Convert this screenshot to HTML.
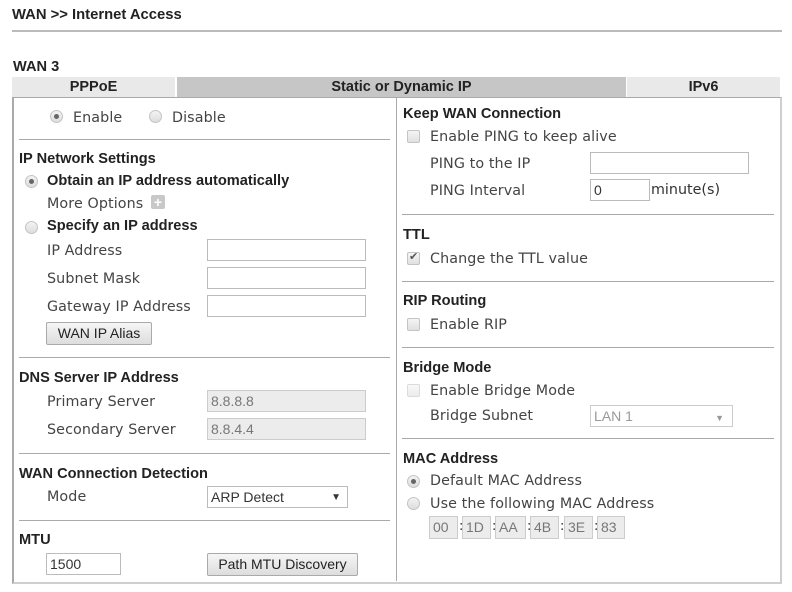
<!DOCTYPE html>
<html><head><meta charset="utf-8"><style>
*{box-sizing:border-box;margin:0;padding:0}
body{width:792px;height:592px;background:#fff;position:relative;overflow:hidden;font-family:"DejaVu Sans","Liberation Sans",sans-serif;color:#333}
.a{position:absolute;white-space:nowrap}
.h{font-family:"Liberation Sans",sans-serif;font-weight:bold;font-size:14.6px;color:#222;transform:translateY(1px)}
.l{font-size:14.3px;color:#444;letter-spacing:0.1px}
.in{position:absolute;height:22px;border:1px solid #bbb;background:#fff;font-family:"Liberation Sans",sans-serif;font-size:14px;color:#333;padding:2px 3px;line-height:16px}
.dis{background:#ececec;color:#777;border-color:#ccc}
.hr{position:absolute;height:1px;background:#aaa}
.rad{position:absolute;width:13px;height:13px;border-radius:50%;border:1px solid #c4c4c4;background:linear-gradient(#f3f3f3,#ddd)}
.rad.on::after{content:"";position:absolute;left:3px;top:3px;width:5px;height:5px;border-radius:50%;background:#666}
.cb{position:absolute;width:13px;height:13px;border:1px solid #c4c4c4;border-radius:2px;background:linear-gradient(#f5f5f5,#e0e0e0)}
.btn{position:absolute;height:23px;border:1px solid #aaa;border-radius:2px;background:linear-gradient(#f6f6f6,#ddd);font-family:"Liberation Sans",sans-serif;font-size:14px;color:#222;text-align:center;line-height:21px}
.tab{position:absolute;top:77px;height:20px;font-family:"Liberation Sans",sans-serif;font-weight:bold;font-size:14.5px;color:#222;text-align:center;line-height:20px}
</style></head><body>
<div class="a h" style="left:12px;top:6px;font-size:14.8px">WAN &gt;&gt; Internet Access</div>
<div class="hr" style="left:12px;top:30px;width:770px;background:#bbb;height:2px"></div>
<div class="a h" style="left:13px;top:58px">WAN 3</div>
<div class="tab" style="left:12px;width:163px;background:#e9e9e9">PPPoE</div>
<div class="tab" style="left:177px;width:449px;background:#c6c6c6">Static or Dynamic IP</div>
<div class="tab" style="left:627px;width:153px;background:#e9e9e9">IPv6</div>
<div class="a" style="left:12px;top:97px;width:770px;height:487px;border:2px solid #cfcfcf;border-top:1px solid #aaa;border-left:2px solid #aaa"></div>
<div class="a" style="left:396px;top:97px;width:1px;height:484px;background:#aaa"></div>

<!-- left -->
<div class="rad on" style="left:50px;top:110px"></div><div class="a l" style="left:73px;top:110px">Enable</div>
<div class="rad" style="left:149px;top:110px"></div><div class="a l" style="left:172px;top:110px">Disable</div>
<div class="hr" style="left:19px;top:139px;width:371px"></div>
<div class="a h" style="left:19px;top:150px">IP Network Settings</div>
<div class="rad on" style="left:25px;top:175px"></div><div class="a h" style="left:47px;top:172px">Obtain an IP address automatically</div>
<div class="a l" style="left:47px;top:196px">More Options</div>
<div class="a" style="left:151px;top:195px;width:14px;height:14px;background:#c8c8c8;border-radius:2px;color:#fff;font:bold 14px/14px 'Liberation Sans';text-align:center">+</div>
<div class="rad" style="left:25px;top:221px"></div><div class="a h" style="left:47px;top:217px">Specify an IP address</div>
<div class="a l" style="left:47px;top:243px">IP Address</div><div class="in" style="left:207px;top:239px;width:159px"></div>
<div class="a l" style="left:47px;top:271px">Subnet Mask</div><div class="in" style="left:207px;top:267px;width:159px"></div>
<div class="a l" style="left:47px;top:299px">Gateway IP Address</div><div class="in" style="left:207px;top:295px;width:159px"></div>
<div class="btn" style="left:46px;top:322px;width:106px">WAN IP Alias</div>
<div class="hr" style="left:19px;top:357px;width:371px"></div>
<div class="a h" style="left:19px;top:369px">DNS Server IP Address</div>
<div class="a l" style="left:47px;top:394px">Primary Server</div><div class="in dis" style="left:207px;top:390px;width:159px">8.8.8.8</div>
<div class="a l" style="left:47px;top:422px">Secondary Server</div><div class="in dis" style="left:207px;top:418px;width:159px">8.8.4.4</div>
<div class="hr" style="left:19px;top:453px;width:371px"></div>
<div class="a h" style="left:19px;top:465px">WAN Connection Detection</div>
<div class="a l" style="left:47px;top:489px">Mode</div>
<div class="in" style="left:207px;top:486px;width:141px">ARP Detect<span style="position:absolute;right:6px;font-size:10px;top:3px">▼</span></div>
<div class="hr" style="left:19px;top:520px;width:371px"></div>
<div class="a h" style="left:19px;top:531px">MTU</div>
<div class="in" style="left:46px;top:553px;width:75px">1500</div>
<div class="btn" style="left:207px;top:553px;width:151px">Path MTU Discovery</div>

<!-- right -->
<div class="a h" style="left:403px;top:105px">Keep WAN Connection</div>
<div class="cb" style="left:407px;top:130px"></div><div class="a l" style="left:430px;top:129px">Enable PING to keep alive</div>
<div class="a l" style="left:430px;top:156px">PING to the IP</div><div class="in" style="left:590px;top:152px;width:159px"></div>
<div class="a l" style="left:430px;top:183px">PING Interval</div><div class="in" style="left:590px;top:179px;width:60px">0</div>
<div class="a" style="left:651px;top:182px;font-size:14.3px;color:#333">minute(s)</div>
<div class="hr" style="left:402px;top:214px;width:372px"></div>
<div class="a h" style="left:403px;top:226px">TTL</div>
<div class="cb" style="left:407px;top:252px"></div><div class="a" style="left:409px;top:250px;font-size:11px;color:#555">✔</div><div class="a l" style="left:430px;top:251px">Change the TTL value</div>
<div class="hr" style="left:402px;top:281px;width:372px"></div>
<div class="a h" style="left:403px;top:292px">RIP Routing</div>
<div class="cb" style="left:407px;top:318px"></div><div class="a l" style="left:430px;top:317px">Enable RIP</div>
<div class="hr" style="left:402px;top:347px;width:372px"></div>
<div class="a h" style="left:403px;top:359px">Bridge Mode</div>
<div class="cb" style="left:407px;top:384px;opacity:.6"></div><div class="a l" style="left:430px;top:383px">Enable Bridge Mode</div>
<div class="a l" style="left:430px;top:408px">Bridge Subnet</div>
<div class="in" style="left:590px;top:405px;width:143px;color:#999;border-color:#ccc">LAN 1<span style="position:absolute;right:8px;font-size:9px;top:4px">▼</span></div>
<div class="hr" style="left:402px;top:438px;width:372px"></div>
<div class="a h" style="left:403px;top:450px">MAC Address</div>
<div class="rad on" style="left:407px;top:475px"></div><div class="a l" style="left:430px;top:473px">Default MAC Address</div>
<div class="rad" style="left:407px;top:497px"></div><div class="a l" style="left:430px;top:496px">Use the following MAC Address</div>
<div class="in dis" style="left:429px;top:516px;width:29px;height:23px">00</div><div class="a" style="left:459px;top:519px;font-size:13px">:</div>
<div class="in dis" style="left:462px;top:516px;width:29px;height:23px">1D</div><div class="a" style="left:492px;top:519px;font-size:13px">:</div>
<div class="in dis" style="left:495px;top:516px;width:31px;height:23px">AA</div><div class="a" style="left:527px;top:519px;font-size:13px">:</div>
<div class="in dis" style="left:530px;top:516px;width:29px;height:23px">4B</div><div class="a" style="left:560px;top:519px;font-size:13px">:</div>
<div class="in dis" style="left:564px;top:516px;width:29px;height:23px">3E</div><div class="a" style="left:594px;top:519px;font-size:13px">:</div>
<div class="in dis" style="left:597px;top:516px;width:28px;height:23px">83</div>
</body></html>
